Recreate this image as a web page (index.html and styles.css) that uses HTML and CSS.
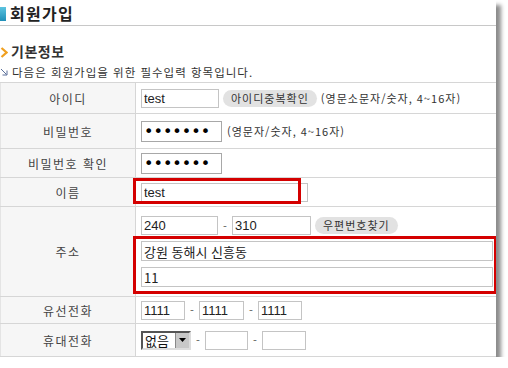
FILE: index.html
```html
<!DOCTYPE html>
<html lang="ko">
<head>
    <meta charset="UTF-8">
    <title>회원가입</title>
    <link rel="stylesheet" href="styles.css">
</head>
<body>
    <div class="frame">
        <h1 class="title"><span class="title-mark"></span>회원가입</h1>

        <h2 class="section">
            <svg class="chevron" width="8" height="11" viewBox="0 0 8 11"><polyline points="1.5,1 6.5,5.5 1.5,10" fill="none" stroke="#f0a020" stroke-width="2.2"/></svg>
            기본정보
        </h2>
        <p class="desc">
            <svg class="arrow" width="8" height="8" viewBox="0 0 8 8"><line x1="1" y1="1" x2="6.5" y2="6.5" stroke="#5a6f9a" stroke-width="1"/><polyline points="2.5,7 7,7 7,2.5" fill="none" stroke="#5a6f9a" stroke-width="1"/></svg>
            다음은 회원가입을 위한 필수입력 항목입니다.
        </p>

        <table class="form">
            <tr class="r1">
                <th>아이디</th>
                <td>
                    <div class="line">
                        <input class="field w78" type="text" value="test">
                        <span class="pill">아이디중복확인</span>
                        <span class="hint">(영문소문자/숫자, 4~16자)</span>
                    </div>
                </td>
            </tr>
            <tr class="r2">
                <th>비밀번호</th>
                <td>
                    <div class="line">
                        <input class="field w81 pw" type="password" value="1234567">
                        <span class="hint">(영문자/숫자, 4~16자)</span>
                    </div>
                </td>
            </tr>
            <tr class="r3">
                <th>비밀번호 확인</th>
                <td><div class="line"><input class="field w81 pw" type="password" value="1234567"></div></td>
            </tr>
            <tr class="r4">
                <th>이름</th>
                <td><div class="line"><input class="field w167" type="text" value="test"></div></td>
            </tr>
            <tr class="r5">
                <th>주소</th>
                <td>
                    <div class="line">
                        <input class="field w77" type="text" value="240">
                        <span class="dash">-</span>
                        <input class="field w79" type="text" value="310">
                        <span class="pill zip">우편번호찾기</span>
                    </div>
                    <div class="line"><input class="field wfull addr" type="text" value="강원 동해시 신흥동"></div>
                    <div class="line"><input class="field wfull addr" type="text" value="11"></div>
                </td>
            </tr>
            <tr class="r6">
                <th>유선전화</th>
                <td>
                    <div class="line">
                        <input class="field w44" type="text" value="1111">
                        <span class="dash">-</span>
                        <input class="field w45" type="text" value="1111">
                        <span class="dash">-</span>
                        <input class="field w44" type="text" value="1111">
                    </div>
                </td>
            </tr>
            <tr class="r7">
                <th>휴대전화</th>
                <td>
                    <div class="line">
                        <span class="select"><span class="select-text">없음</span><span class="select-btn"><svg width="7" height="4" viewBox="0 0 7 4"><polygon points="0,0 7,0 3.5,4" fill="#000"/></svg></span></span>
                        <span class="dash">-</span>
                        <input class="field w43" type="text" value="">
                        <span class="dash">-</span>
                        <input class="field w44" type="text" value="">
                    </div>
                </td>
            </tr>
        </table>

        <div class="mark mark-name"></div>
        <div class="mark mark-addr"></div>
    </div>
</body>
</html>
```

FILE: styles.css
```css
body {
    margin: 0;
    background-color: #fff;
    font-family: "Noto Sans CJK KR", "Liberation Sans", sans-serif;
    color: #333;
}
.frame {
    position: relative;
    width: 496px;
    height: 357px;
    background-color: #fff;
    box-shadow: 5px 5px 4px rgba(0,0,0,0.45);
    overflow: hidden;
}
.title {
    display: flex;
    align-items: center;
    gap: 4px;
    height: 25px;
    margin: 0;
    border-bottom: 1px solid #c8c8c8;
    font-size: 16px;
    font-weight: bold;
    color: #222;
    line-height: 1;
    letter-spacing: 1.3px;
}
.title-mark {
    width: 6px;
    height: 14px;
    margin-top: 3px;
    background: linear-gradient(#5cc4e0, #1f8fb8);
}
.section {
    display: flex;
    align-items: center;
    gap: 3px;
    height: 16px;
    margin: 17px 0 0 0;
    font-size: 14px;
    font-weight: bold;
    color: #333;
    letter-spacing: 0.5px;
}
.chevron {
    margin-top: 2px;
}
.desc {
    display: flex;
    align-items: center;
    gap: 4px;
    height: 14px;
    margin: 6px 0 0 0;
    font-size: 11.5px;
    letter-spacing: 1px;
    color: #333;
}
.form {
    margin-top: 3px;
    width: 497px;
    border-collapse: collapse;
    font-size: 12px;
}
.form th, .form td {
    border: 1px solid #d6d6d6;
    padding: 0;
    vertical-align: middle;
}
.form th {
    width: 134px;
    background-color: #f6f6f6;
    font-weight: normal;
    color: #444;
    text-align: center;
    letter-spacing: 1.5px;
    border-left: 1px solid #e4e4e4;
}
.form td {
    padding-left: 5px;
    white-space: nowrap;
}
.r1 { height: 31px; }
.r2 { height: 35px; }
.r3 { height: 29px; }
.r4 { height: 29px; }
.r5 { height: 90px; }
.r6 { height: 27px; }
.r7 { height: 33px; }
.field {
    box-sizing: border-box;
    height: 19px;
    margin: 0;
    padding: 0 2px;
    border: 1px solid #c4c4c4;
    font-family: "Liberation Sans", Arial, sans-serif;
    font-size: 13px;
    color: #222;
}
.pw {
    height: 21px;
    border-color: #a8a8a8;
    font-family: "DejaVu Sans", sans-serif;
    font-size: 16px;
    line-height: 19px;
    color: #000;
}
.addr {
    font-family: "Noto Sans CJK KR", "Liberation Sans", sans-serif;
    font-size: 13px;
}
.w43 { width: 43px; }
.w44 { width: 44px; }
.w45 { width: 45px; }
.w77 { width: 77px; }
.w78 { width: 78px; }
.w79 { width: 79px; }
.w81 { width: 81px; }
.w167 { width: 167px; }
.wfull { width: 352px; height: 20px; }
.line {
    display: flex;
    align-items: center;
}
.line + .line {
    margin-top: 6px;
}
.pill {
    display: inline-block;
    height: 17px;
    line-height: 17px;
    margin-left: 4px;
    padding: 0 8px;
    border-radius: 9px;
    background-color: #e2e2e2;
    font-size: 11px;
    letter-spacing: 1px;
    color: #333;
}
.zip {
    margin-left: 4px;
}
.hint {
    margin-left: 4px;
    font-size: 11px;
    letter-spacing: 1px;
    color: #333;
}
.dash {
    display: inline-block;
    width: 14px;
    text-align: center;
    color: #555;
    font-size: 11px;
}
.r2 .hint {
    margin-left: 5px;
}
.select {
    display: inline-flex;
    align-items: center;
    box-sizing: border-box;
    width: 50px;
    height: 19px;
    border: 2px solid;
    border-color: #555 #ddd #ddd #555;
    background-color: #fff;
}
.select-text {
    flex: 1;
    padding-left: 2px;
    font-size: 13px;
    line-height: 15px;
    color: #111;
}
.select-btn {
    display: flex;
    align-items: center;
    justify-content: center;
    width: 13px;
    height: 15px;
    background-color: #c8c8c8;
    border-left: 1px solid #888;
}
.mark {
    position: absolute;
    border: 3px solid #d40000;
}
.mark-name {
    left: 133px;
    top: 178px;
    width: 162px;
    height: 20px;
}
.mark-addr {
    left: 133px;
    top: 236px;
    width: 358px;
    height: 52px;
}
```
